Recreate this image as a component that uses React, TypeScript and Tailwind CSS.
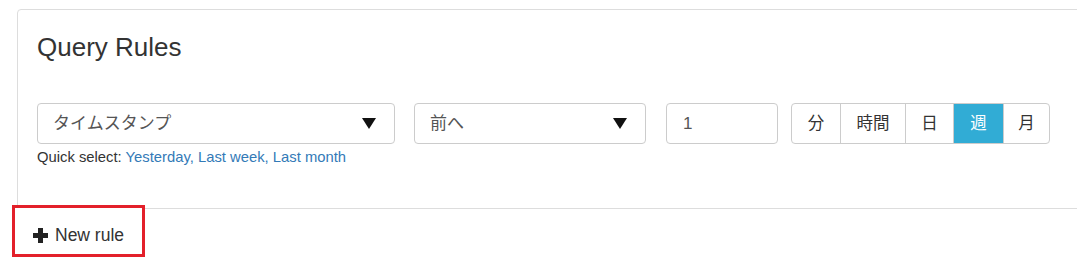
import React from "react";

const font = { fontFamily: '"Liberation Sans", Arial, "Noto Sans CJK JP", sans-serif' };

function Caret() {
  return (
    <svg width="14" height="11" viewBox="0 0 14 11" className="shrink-0">
      <path d="M0 0 H14 L7 11 Z" fill="#111" />
    </svg>
  );
}

function Select({ label, className }: { label: string; className: string }) {
  return (
    <div
      className={`h-[41px] border border-[#ccc] rounded-[4px] bg-white flex items-center justify-between pl-[15px] pr-[18px] text-[17px] text-[#555] ${className}`}
    >
      <span>{label}</span>
      <Caret />
    </div>
  );
}

const units = ["分", "時間", "日", "週", "月"];
const widths = ["w-[48px]", "w-[65px]", "w-[48px]", "w-[50px]", "w-[46px]"];

export default function App() {
  return (
    <div className="relative w-full h-[263px] overflow-hidden bg-white" style={font}>
      <div className="ml-[17px] mt-[9px] w-[1080px] h-[200px] border border-[#ddd] rounded-[4px] pl-[19px]">
        <h3 className="text-[26px] leading-[30px] text-[#333] mt-[22px]">Query Rules</h3>
        <div className="flex items-center mt-[41px]">
          <Select label="タイムスタンプ" className="w-[358px]" />
          <Select label="前へ" className="w-[232px] ml-[19px]" />
          <div className="w-[112px] h-[41px] ml-[20px] border border-[#ccc] rounded-[4px] flex items-center pl-[16px] text-[17px] text-[#555]">
            1
          </div>
          <div className="flex ml-[13px] h-[41px] border border-[#ccc] rounded-[4px] overflow-hidden">
            {units.map((u, i) => (
              <div
                key={u}
                className={`${widths[i]} flex items-center justify-center text-[16.5px] ${
                  i > 0 ? "border-l border-[#ccc]" : ""
                } ${u === "週" ? "bg-[#31acd5] text-white border-[#2a9ec6]" : "text-[#333]"}`}
              >
                {u}
              </div>
            ))}
          </div>
        </div>
        <div className="text-[14.8px] text-[#333] mt-[3px] leading-[20px]">
          Quick select: <span className="text-[#337ab7]">Yesterday,</span>{" "}
          <span className="text-[#337ab7]">Last week,</span>{" "}
          <span className="text-[#337ab7]">Last month</span>
        </div>
      </div>
      <div className="relative z-10 -mt-[4px] ml-[12px] w-[133px] h-[52px] border-[3px] border-[#e3202a] bg-white flex items-start pt-[17px] pl-[18px] text-[17.5px] leading-[20px] text-[#333]">
        <svg width="15" height="15" viewBox="0 0 15 15" className="mr-[7px] mt-[3px]">
          <rect x="5" y="0" width="5" height="15" fill="#222" />
          <rect x="0" y="5" width="15" height="5" fill="#222" />
        </svg>
        New rule
      </div>
    </div>
  );
}
